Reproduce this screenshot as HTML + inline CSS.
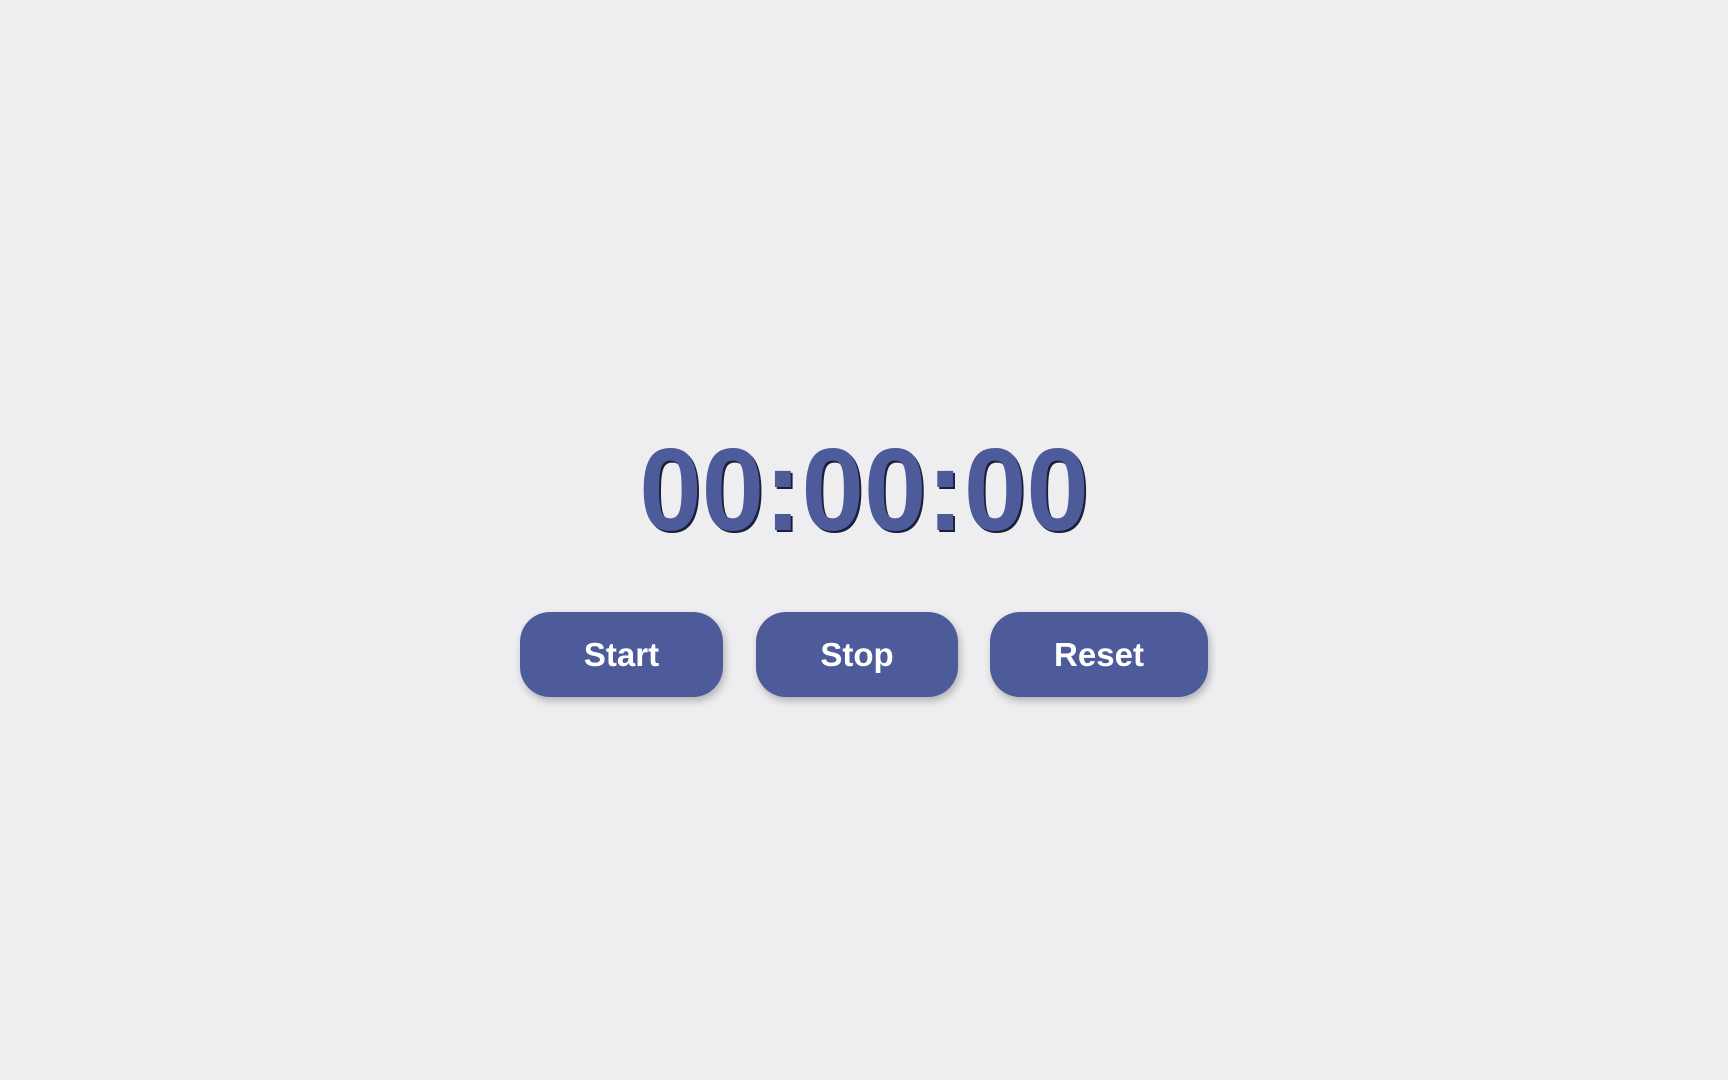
<!DOCTYPE html>
<html><head><meta charset="utf-8"><style>
html,body{margin:0;padding:0;width:1728px;height:1080px;background:#eeeef0;overflow:hidden;font-family:"Liberation Sans",Arial,sans-serif}
.t{position:absolute;left:0;width:1728px;top:425px;text-align:center;font-size:117px;font-weight:bold;color:#4e5b9b;text-shadow:2px 2px 0 #1a1f3a;line-height:130px;transform:scaleX(0.96)}
.b{position:absolute;top:612px;height:85px;border-radius:30px;background:#4e5b9b;color:#fff;font-size:33px;font-weight:bold;display:flex;align-items:center;justify-content:center;box-shadow:2px 4px 8px rgba(0,0,0,.25)}
</style></head><body>
<div class="t">00:00:00</div>
<div class="b" style="left:520px;width:203px">Start</div>
<div class="b" style="left:756px;width:202px">Stop</div>
<div class="b" style="left:990px;width:218px">Reset</div>
</body></html>
